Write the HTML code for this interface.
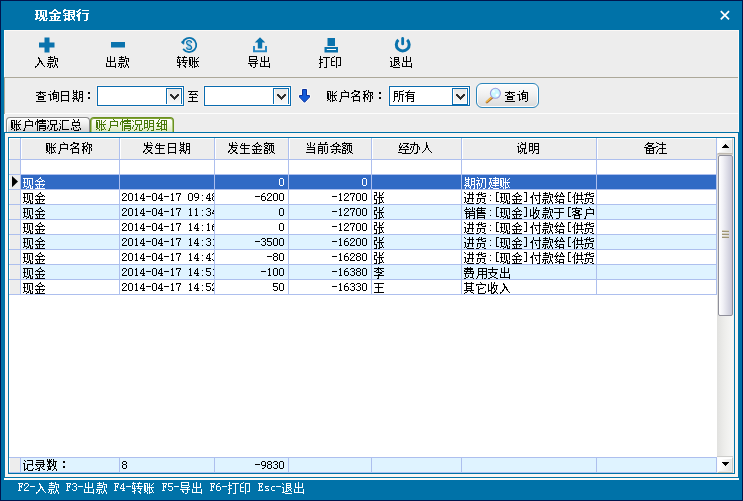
<!DOCTYPE html>
<html lang="zh"><head><meta charset="utf-8"><title>现金银行</title>
<style>
html,body{margin:0;padding:0}
body{width:743px;height:501px;position:relative;overflow:hidden;background:#00154d;font-family:"Liberation Sans",sans-serif;font-size:12px}
.a{position:absolute;display:block}
.t{position:absolute;overflow:hidden;white-space:nowrap;line-height:14px;font-size:12px}
.t svg{position:absolute;left:0;top:0;fill:currentColor;display:block}
.t span{color:transparent;letter-spacing:0}
.tb{font-weight:bold;font-size:13px}
</style></head>
<body>
<svg width="0" height="0" style="position:absolute"><defs>
<path id="g2D" d="M0 5h5v1h-5z"/>
<path id="g30" d="M1 2h3v1h-3zM0 3h1v6h-1zM4 3h1v6h-1zM1 9h3v1h-3z"/>
<path id="g31" d="M2 2h1v1h-1zM1 3h2v1h-2zM2 4h1v5h-1zM1 9h3v1h-3z"/>
<path id="g32" d="M1 2h3v1h-3zM0 3h1v2h-1zM4 3h1v2h-1zM3 5h1v1h-1zM2 6h1v1h-1zM1 7h1v1h-1zM0 8h1v1h-1zM0 9h5v1h-5z"/>
<path id="g33" d="M1 2h3v1h-3zM0 3h1v1h-1zM4 3h1v2h-1zM2 5h2v1h-2zM4 6h1v3h-1zM0 8h1v1h-1zM1 9h3v1h-3z"/>
<path id="g34" d="M3 2h1v1h-1zM2 3h2v1h-2zM1 4h1v2h-1zM3 4h1v3h-1zM0 6h1v1h-1zM0 7h5v1h-5zM3 8h1v1h-1zM2 9h3v1h-3z"/>
<path id="g35" d="M0 2h5v1h-5zM0 3h1v2h-1zM0 5h4v1h-4zM4 6h1v3h-1zM0 8h1v1h-1zM1 9h3v1h-3z"/>
<path id="g36" d="M2 2h2v1h-2zM1 3h1v1h-1zM0 4h1v1h-1zM0 5h4v1h-4zM0 6h1v3h-1zM4 6h1v3h-1zM1 9h3v1h-3z"/>
<path id="g37" d="M0 2h5v1h-5zM0 3h1v1h-1zM4 3h1v1h-1zM3 4h1v2h-1zM2 6h1v4h-1z"/>
<path id="g38" d="M1 2h3v1h-3zM0 3h1v2h-1zM4 3h1v2h-1zM1 5h3v1h-3zM0 6h1v3h-1zM4 6h1v3h-1zM1 9h3v1h-3z"/>
<path id="g39" d="M1 2h3v1h-3zM0 3h1v3h-1zM4 3h1v3h-1zM1 6h4v1h-4zM4 7h1v1h-1zM3 8h1v1h-1zM1 9h2v1h-2z"/>
<path id="g3A" d="M2 4h1v1h-1zM2 9h1v1h-1z"/>
<path id="g45" d="M0 2h5v1h-5zM1 3h1v2h-1zM4 3h1v1h-1zM3 4h1v1h-1zM1 5h3v1h-3zM1 6h1v3h-1zM3 6h1v1h-1zM4 8h1v1h-1zM0 9h5v1h-5z"/>
<path id="g46" d="M0 2h5v1h-5zM1 3h1v2h-1zM4 3h1v1h-1zM3 4h1v1h-1zM1 5h3v1h-3zM1 6h1v3h-1zM3 6h1v1h-1zM0 9h3v1h-3z"/>
<path id="g5B" d="M2 1h3v1h-3zM2 2h1v8h-1zM2 10h3v1h-3z"/>
<path id="g5D" d="M0 1h3v1h-3zM2 2h1v8h-1zM0 10h3v1h-3z"/>
<path id="g63" d="M2 5h3v1h-3zM1 6h1v3h-1zM2 9h3v1h-3z"/>
<path id="g73" d="M1 5h4v1h-4zM1 6h1v1h-1zM2 7h2v1h-2zM4 8h1v1h-1zM1 9h4v1h-4z"/>
<path id="g4E8E" d="M0 2h10v1h-10zM5 3h1v3h-1zM0 6h10v1h-10zM5 7h1v5h-1zM2 12h3v1h-3z"/>
<path id="g4EBA" d="M4 1h1v3h-1zM4 4h2v3h-2zM3 7h1v2h-1zM6 7h1v2h-1zM2 9h1v1h-1zM7 9h1v1h-1zM1 10h1v1h-1zM8 10h1v1h-1zM0 11h1v1h-1zM9 11h1v1h-1z"/>
<path id="g4ED8" d="M3 1h1v3h-1zM9 1h1v3h-1zM2 4h1v1h-1zM4 4h7v1h-7zM1 5h2v1h-2zM9 5h1v7h-1zM0 6h3v1h-3zM5 6h1v2h-1zM2 7h1v6h-1zM6 8h1v2h-1zM7 12h3v1h-3z"/>
<path id="g4F59" d="M6 1h1v1h-1zM5 2h2v1h-2zM3 3h2v1h-2zM7 3h2v1h-2zM2 4h2v1h-2zM8 4h2v1h-2zM0 5h2v1h-2zM3 5h6v1h-6zM10 5h1v1h-1zM6 6h1v2h-1zM1 8h10v1h-10zM6 9h1v3h-1zM2 10h2v1h-2zM8 10h2v1h-2zM1 11h2v1h-2zM9 11h2v1h-2zM4 12h2v1h-2z"/>
<path id="g4F9B" d="M3 1h1v2h-1zM9 1h1v3h-1zM5 2h1v2h-1zM2 3h1v2h-1zM4 4h7v1h-7zM1 5h2v1h-2zM5 5h1v3h-1zM9 5h1v3h-1zM0 6h1v1h-1zM2 6h1v7h-1zM4 8h8v1h-8zM5 10h1v1h-1zM9 10h1v1h-1zM4 11h2v1h-2zM10 11h1v2h-1zM4 12h1v1h-1z"/>
<path id="g5165" d="M3 2h1v1h-1zM3 3h2v1h-2zM4 4h1v1h-1zM4 5h2v1h-2zM4 6h3v1h-3zM4 7h1v1h-1zM6 7h1v1h-1zM3 8h1v1h-1zM6 8h2v1h-2zM2 9h2v1h-2zM7 9h1v1h-1zM2 10h1v1h-1zM8 10h1v1h-1zM0 11h2v1h-2zM9 11h1v1h-1zM0 12h1v1h-1z"/>
<path id="g5176" d="M2 1h1v1h-1zM7 1h1v1h-1zM0 2h10v1h-10zM2 3h1v2h-1zM7 3h1v2h-1zM2 5h6v1h-6zM2 6h1v1h-1zM7 6h1v1h-1zM2 7h6v1h-6zM2 8h1v1h-1zM7 8h1v1h-1zM0 9h10v1h-10zM3 10h1v1h-1zM6 10h1v1h-1zM1 11h2v1h-2zM7 11h2v1h-2zM0 12h1v1h-1zM9 12h1v1h-1z"/>
<path id="g51B5" d="M0 2h1v1h-1zM3 2h7v1h-7zM1 3h1v1h-1zM3 3h1v3h-1zM9 3h1v3h-1zM3 6h7v1h-7zM1 7h1v2h-1zM5 7h1v2h-1zM7 7h1v5h-1zM0 9h1v2h-1zM4 9h1v2h-1zM10 10h1v2h-1zM3 11h2v1h-2zM2 12h1v1h-1zM7 12h3v1h-3z"/>
<path id="g51FA" d="M4 1h1v5h-1zM1 2h1v4h-1zM8 2h1v4h-1zM1 6h8v1h-8zM4 7h1v4h-1zM0 8h1v3h-1zM9 8h1v3h-1zM0 11h10v1h-10zM9 12h1v1h-1z"/>
<path id="g521D" d="M1 1h1v1h-1zM2 2h1v1h-1zM4 2h6v1h-6zM6 3h1v4h-1zM9 3h1v9h-1zM0 4h4v1h-4zM2 5h1v2h-1zM1 7h3v1h-3zM5 7h1v4h-1zM0 8h2v1h-2zM3 8h1v2h-1zM1 9h1v4h-1zM4 11h1v1h-1zM3 12h1v1h-1zM7 12h2v1h-2z"/>
<path id="g524D" d="M2 1h1v2h-1zM7 1h2v1h-2zM7 2h1v1h-1zM0 3h10v1h-10zM0 5h5v1h-5zM6 5h1v6h-1zM9 5h1v7h-1zM0 6h1v1h-1zM4 6h1v1h-1zM0 7h5v1h-5zM0 8h1v1h-1zM4 8h1v1h-1zM0 9h5v1h-5zM0 10h1v3h-1zM4 10h1v2h-1zM3 12h2v1h-2zM7 12h2v1h-2z"/>
<path id="g529E" d="M4 1h1v2h-1zM0 3h8v1h-8zM4 4h1v1h-1zM7 4h1v1h-1zM1 5h1v2h-1zM3 5h1v4h-1zM7 5h2v1h-2zM7 6h1v5h-1zM9 6h1v3h-1zM0 7h1v2h-1zM2 9h1v2h-1zM1 11h1v1h-1zM6 11h2v1h-2zM0 12h1v1h-1zM4 12h3v1h-3z"/>
<path id="g5370" d="M3 1h1v1h-1zM1 2h2v1h-2zM5 2h5v1h-5zM0 3h1v3h-1zM5 3h1v10h-1zM9 3h1v7h-1zM0 6h4v1h-4zM0 7h1v3h-1zM0 10h4v1h-4zM7 10h3v1h-3z"/>
<path id="g53D1" d="M4 1h1v3h-1zM7 1h1v1h-1zM1 2h1v2h-1zM8 2h1v1h-1zM1 4h9v1h-9zM3 5h2v1h-2zM3 6h6v1h-6zM3 7h1v1h-1zM8 7h1v1h-1zM2 8h1v1h-1zM4 8h1v1h-1zM7 8h1v1h-1zM1 9h1v1h-1zM5 9h3v1h-3zM0 10h2v1h-2zM5 10h2v1h-2zM0 11h1v1h-1zM4 11h1v1h-1zM7 11h2v1h-2zM2 12h2v1h-2zM8 12h2v1h-2z"/>
<path id="g540D" d="M3 1h2v1h-2zM3 2h6v1h-6zM1 3h2v1h-2zM7 3h2v1h-2zM0 4h2v1h-2zM7 4h1v1h-1zM3 5h1v1h-1zM5 5h2v1h-2zM4 6h2v1h-2zM1 7h8v1h-8zM0 8h1v1h-1zM2 8h1v3h-1zM8 8h1v3h-1zM2 11h7v1h-7zM2 12h1v1h-1zM8 12h1v1h-1z"/>
<path id="g552E" d="M2 1h1v1h-1zM5 1h1v1h-1zM1 2h9v1h-9zM1 3h1v1h-1zM5 3h1v1h-1zM0 4h9v1h-9zM1 5h1v1h-1zM5 5h1v1h-1zM1 6h8v1h-8zM1 7h9v1h-9zM1 8h1v1h-1zM1 9h8v1h-8zM1 10h1v1h-1zM8 10h1v1h-1zM1 11h8v1h-8zM1 12h1v1h-1zM8 12h1v1h-1z"/>
<path id="g5907" d="M4 1h1v1h-1zM3 2h7v1h-7zM2 3h2v1h-2zM8 3h1v1h-1zM1 4h1v1h-1zM4 4h4v2h-4zM0 6h4v1h-4zM8 6h4v1h-4zM2 7h8v1h-8zM2 8h1v1h-1zM5 8h1v1h-1zM9 8h1v1h-1zM2 9h8v1h-8zM2 10h1v2h-1zM5 10h1v2h-1zM9 10h1v2h-1zM2 12h8v1h-8z"/>
<path id="g5B83" d="M4 1h1v1h-1zM5 2h1v1h-1zM0 3h10v1h-10zM0 4h1v1h-1zM9 4h1v1h-1zM2 5h1v3h-1zM7 6h1v1h-1zM4 7h3v1h-3zM2 8h2v1h-2zM2 9h1v3h-1zM9 10h1v2h-1zM2 12h7v1h-7z"/>
<path id="g5BA2" d="M4 1h1v1h-1zM0 2h10v1h-10zM0 3h1v1h-1zM3 3h1v1h-1zM9 3h1v1h-1zM3 4h5v1h-5zM1 5h3v1h-3zM6 5h2v1h-2zM0 6h1v1h-1zM3 6h4v1h-4zM4 7h3v1h-3zM1 8h3v1h-3zM6 8h4v1h-4zM0 9h1v1h-1zM2 9h6v1h-6zM2 10h1v2h-1zM7 10h1v2h-1zM2 12h6v1h-6z"/>
<path id="g5BFC" d="M1 1h8v1h-8zM1 2h1v2h-1zM8 2h1v2h-1zM1 4h8v1h-8zM1 5h1v1h-1zM9 5h1v1h-1zM1 6h8v1h-8zM7 7h1v1h-1zM0 8h10v1h-10zM2 9h1v1h-1zM7 9h1v3h-1zM2 10h2v1h-2zM3 11h1v1h-1zM5 12h2v1h-2z"/>
<path id="g5EFA" d="M7 1h1v1h-1zM1 2h3v1h-3zM5 2h6v1h-6zM2 3h1v3h-1zM7 3h1v1h-1zM10 3h1v1h-1zM4 4h7v1h-7zM7 5h1v1h-1zM10 5h1v1h-1zM1 6h3v1h-3zM5 6h6v2h-6zM1 7h1v2h-1zM3 7h1v2h-1zM7 8h1v1h-1zM2 9h1v2h-1zM4 9h7v1h-7zM7 10h1v1h-1zM1 11h1v1h-1zM3 11h2v1h-2zM0 12h2v1h-2zM5 12h6v1h-6z"/>
<path id="g5F20" d="M0 1h3v1h-3zM5 1h1v3h-1zM9 1h1v1h-1zM2 2h1v2h-1zM8 2h1v2h-1zM0 4h3v1h-3zM5 4h3v1h-3zM0 5h1v3h-1zM5 5h1v1h-1zM3 6h7v1h-7zM5 7h1v4h-1zM7 7h1v2h-1zM0 8h3v1h-3zM2 9h1v3h-1zM8 9h1v2h-1zM5 11h3v1h-3zM9 11h1v1h-1zM0 12h3v1h-3zM4 12h2v1h-2z"/>
<path id="g5F53" d="M4 1h1v5h-1zM1 2h1v2h-1zM8 2h1v2h-1zM2 4h1v1h-1zM7 4h1v1h-1zM1 6h8v1h-8zM8 7h1v1h-1zM1 8h8v1h-8zM8 9h1v2h-1zM0 11h9v1h-9zM8 12h1v1h-1z"/>
<path id="g5F55" d="M1 2h8v1h-8zM8 3h1v1h-1zM1 4h8v1h-8zM8 5h1v1h-1zM0 6h10v1h-10zM1 7h1v1h-1zM5 7h1v2h-1zM8 7h1v1h-1zM2 8h1v1h-1zM7 8h2v1h-2zM4 9h1v1h-1zM6 9h1v1h-1zM2 10h3v1h-3zM7 10h1v1h-1zM0 11h2v1h-2zM4 11h1v1h-1zM8 11h2v1h-2zM3 12h2v1h-2z"/>
<path id="g603B" d="M2 1h1v1h-1zM7 1h1v2h-1zM3 2h1v2h-1zM6 3h1v1h-1zM1 4h8v1h-8zM1 5h1v2h-1zM8 5h1v2h-1zM1 7h8v1h-8zM4 8h1v1h-1zM2 9h1v3h-1zM5 9h1v1h-1zM8 9h1v1h-1zM0 10h1v2h-1zM9 10h1v2h-1zM7 11h1v1h-1zM3 12h5v1h-5z"/>
<path id="g60C5" d="M2 1h1v2h-1zM7 1h1v1h-1zM4 2h7v1h-7zM1 3h10v1h-10zM0 4h1v3h-1zM2 4h2v1h-2zM7 4h1v1h-1zM2 5h1v8h-1zM4 5h7v1h-7zM4 7h7v2h-7zM4 9h1v1h-1zM10 9h1v1h-1zM4 10h7v1h-7zM4 11h1v2h-1zM10 11h1v1h-1zM8 12h2v1h-2z"/>
<path id="g6237" d="M5 1h1v1h-1zM6 2h1v1h-1zM2 3h8v1h-8zM2 4h1v3h-1zM9 4h1v3h-1zM2 7h8v1h-8zM2 8h1v2h-1zM9 8h1v1h-1zM1 10h1v2h-1zM0 12h2v1h-2z"/>
<path id="g6240" d="M10 1h1v1h-1zM1 2h4v1h-4zM6 2h4v1h-4zM1 3h1v1h-1zM6 3h1v2h-1zM1 4h4v1h-4zM1 5h1v2h-1zM4 5h1v2h-1zM6 5h5v1h-5zM6 6h1v5h-1zM9 6h1v7h-1zM1 7h4v1h-4zM1 8h1v4h-1zM5 11h1v2h-1zM0 12h1v1h-1z"/>
<path id="g6253" d="M1 1h1v3h-1zM4 2h7v1h-7zM7 3h1v9h-1zM0 4h4v1h-4zM1 5h1v2h-1zM1 7h3v1h-3zM0 8h2v1h-2zM1 9h1v3h-1zM0 12h2v1h-2zM5 12h3v1h-3z"/>
<path id="g652F" d="M4 1h1v2h-1zM0 3h10v1h-10zM4 4h1v2h-1zM0 6h9v1h-9zM2 7h1v2h-1zM7 7h2v1h-2zM7 8h1v1h-1zM3 9h1v1h-1zM6 9h1v1h-1zM4 10h2v1h-2zM2 11h2v1h-2zM6 11h2v1h-2zM0 12h2v1h-2zM8 12h2v1h-2z"/>
<path id="g6536" d="M3 1h1v5h-1zM6 1h1v2h-1zM0 3h1v6h-1zM5 3h1v1h-1zM5 4h5v1h-5zM5 5h1v1h-1zM8 5h1v4h-1zM3 6h3v1h-3zM3 7h2v1h-2zM6 7h1v2h-1zM3 8h1v1h-1zM0 9h4v1h-4zM7 9h1v1h-1zM0 10h1v1h-1zM3 10h1v2h-1zM6 10h2v1h-2zM5 11h2v1h-2zM8 11h1v1h-1zM3 12h3v1h-3zM9 12h1v1h-1z"/>
<path id="g6570" d="M0 1h1v2h-1zM2 1h1v1h-1zM4 1h1v1h-1zM6 1h1v2h-1zM2 2h2v1h-2zM0 3h5v1h-5zM6 3h4v1h-4zM1 4h3v1h-3zM6 4h1v2h-1zM8 4h1v4h-1zM1 5h2v1h-2zM4 5h1v1h-1zM0 6h1v1h-1zM2 6h1v2h-1zM5 6h2v2h-2zM0 8h5v1h-5zM7 8h2v1h-2zM1 9h1v1h-1zM3 9h1v1h-1zM7 9h1v1h-1zM1 10h3v2h-3zM7 10h2v1h-2zM6 11h1v1h-1zM9 11h1v2h-1zM0 12h1v1h-1zM5 12h1v1h-1z"/>
<path id="g65E5" d="M1 2h8v1h-8zM1 3h1v3h-1zM8 3h1v3h-1zM1 6h8v1h-8zM1 7h1v4h-1zM8 7h1v4h-1zM1 11h8v1h-8zM1 12h1v1h-1zM8 12h1v1h-1z"/>
<path id="g660E" d="M0 2h4v1h-4zM5 2h5v1h-5zM0 3h1v2h-1zM3 3h1v2h-1zM5 3h1v2h-1zM9 3h1v2h-1zM0 5h4v1h-4zM5 5h5v1h-5zM0 6h1v3h-1zM3 6h1v3h-1zM5 6h1v2h-1zM9 6h1v2h-1zM5 8h5v1h-5zM0 9h4v1h-4zM5 9h1v1h-1zM9 9h1v3h-1zM0 10h1v1h-1zM4 10h1v2h-1zM3 12h1v1h-1zM7 12h3v1h-3z"/>
<path id="g6709" d="M4 1h1v1h-1zM3 2h1v1h-1zM0 3h10v1h-10zM2 4h1v1h-1zM2 5h7v1h-7zM1 6h2v1h-2zM8 6h1v1h-1zM0 7h1v1h-1zM2 7h7v1h-7zM2 8h1v1h-1zM8 8h1v1h-1zM2 9h7v1h-7zM2 10h1v3h-1zM8 10h1v2h-1zM6 12h3v1h-3z"/>
<path id="g671F" d="M1 1h1v2h-1zM4 1h1v2h-1zM7 2h4v1h-4zM1 3h5v1h-5zM7 3h1v2h-1zM10 3h1v2h-1zM1 4h1v1h-1zM4 4h1v1h-1zM2 5h3v1h-3zM7 5h4v1h-4zM1 6h1v1h-1zM4 6h1v1h-1zM7 6h1v2h-1zM10 6h1v2h-1zM2 7h3v1h-3zM1 8h1v1h-1zM4 8h1v1h-1zM7 8h4v1h-4zM0 9h6v1h-6zM7 9h1v1h-1zM10 9h1v3h-1zM2 10h1v1h-1zM4 10h1v1h-1zM6 10h1v1h-1zM1 11h1v2h-1zM5 11h2v1h-2zM6 12h1v1h-1zM9 12h2v1h-2z"/>
<path id="g674E" d="M4 1h1v1h-1zM0 2h10v1h-10zM3 3h2v1h-2zM6 3h1v1h-1zM2 4h1v1h-1zM4 4h1v2h-1zM7 4h1v1h-1zM0 5h2v1h-2zM8 5h2v1h-2zM2 6h6v1h-6zM6 7h2v1h-2zM4 8h2v1h-2zM0 9h10v1h-10zM4 10h1v2h-1zM3 12h2v1h-2z"/>
<path id="g67E5" d="M4 2h1v1h-1zM0 3h10v1h-10zM3 4h2v1h-2zM6 4h1v1h-1zM2 5h1v1h-1zM4 5h1v1h-1zM7 5h1v1h-1zM0 6h2v1h-2zM8 6h2v1h-2zM2 7h6v2h-6zM2 9h1v1h-1zM7 9h1v1h-1zM2 10h6v1h-6zM0 12h10v1h-10z"/>
<path id="g6B3E" d="M3 1h1v1h-1zM7 1h1v2h-1zM1 2h5v1h-5zM3 3h1v1h-1zM7 3h4v1h-4zM1 4h6v1h-6zM10 4h1v3h-1zM6 5h1v1h-1zM8 5h1v4h-1zM1 6h6v1h-6zM0 8h6v1h-6zM1 9h1v2h-1zM3 9h1v3h-1zM8 9h2v1h-2zM5 10h1v2h-1zM7 10h1v2h-1zM9 10h1v1h-1zM0 11h1v1h-1zM10 11h1v2h-1zM2 12h2v1h-2zM6 12h1v1h-1z"/>
<path id="g6C47" d="M1 2h1v1h-1zM3 2h7v1h-7zM3 3h1v8h-1zM0 5h1v1h-1zM1 6h1v1h-1zM1 8h1v3h-1zM0 11h1v2h-1zM3 11h7v1h-7z"/>
<path id="g6CE8" d="M0 1h1v1h-1zM6 1h1v2h-1zM1 2h2v1h-2zM3 3h7v1h-7zM6 4h1v3h-1zM0 5h2v1h-2zM3 7h7v1h-7zM2 8h1v1h-1zM6 8h1v4h-1zM1 9h1v2h-1zM0 11h1v2h-1zM3 12h8v1h-8z"/>
<path id="g738B" d="M0 2h10v1h-10zM4 3h1v3h-1zM1 6h8v1h-8zM4 7h1v4h-1zM0 11h10v1h-10z"/>
<path id="g73B0" d="M0 2h10v1h-10zM1 3h1v3h-1zM4 3h1v6h-1zM9 3h1v6h-1zM6 4h1v5h-1zM0 6h3v1h-3zM1 7h1v3h-1zM6 9h2v1h-2zM1 10h3v1h-3zM5 10h1v1h-1zM7 10h1v2h-1zM9 10h1v2h-1zM0 11h1v1h-1zM4 11h2v1h-2zM3 12h1v1h-1zM7 12h3v1h-3z"/>
<path id="g751F" d="M2 2h1v1h-1zM4 2h1v2h-1zM1 3h1v1h-1zM1 4h9v1h-9zM0 5h1v2h-1zM4 5h1v2h-1zM1 7h8v1h-8zM4 8h1v4h-1zM0 12h10v1h-10z"/>
<path id="g7528" d="M2 2h9v1h-9zM2 3h1v2h-1zM6 3h1v2h-1zM10 3h1v2h-1zM2 5h9v1h-9zM2 6h1v2h-1zM6 6h1v2h-1zM10 6h1v2h-1zM2 8h9v1h-9zM2 9h1v1h-1zM6 9h1v4h-1zM10 9h1v3h-1zM1 10h1v2h-1zM0 12h1v1h-1zM8 12h2v1h-2z"/>
<path id="g79F0" d="M3 1h1v1h-1zM5 1h1v2h-1zM0 2h3v1h-3zM1 3h1v2h-1zM5 3h5v1h-5zM4 4h1v1h-1zM7 4h1v2h-1zM9 4h1v2h-1zM0 5h5v1h-5zM1 6h2v2h-2zM5 6h1v2h-1zM7 6h2v1h-2zM7 7h1v5h-1zM9 7h1v3h-1zM0 8h2v2h-2zM3 8h2v1h-2zM4 9h1v2h-1zM1 10h1v3h-1zM6 12h2v1h-2z"/>
<path id="g7EC6" d="M3 1h1v1h-1zM2 2h1v2h-1zM5 2h6v1h-6zM5 3h1v1h-1zM8 3h1v3h-1zM10 3h1v3h-1zM1 4h1v1h-1zM4 4h2v1h-2zM0 5h4v1h-4zM5 5h1v1h-1zM2 6h1v1h-1zM5 6h6v1h-6zM1 7h2v1h-2zM5 7h1v1h-1zM8 7h1v4h-1zM10 7h1v4h-1zM1 8h5v1h-5zM5 9h1v1h-1zM4 10h2v1h-2zM0 11h4v1h-4zM5 11h6v1h-6zM5 12h1v1h-1zM10 12h1v1h-1z"/>
<path id="g7ECF" d="M2 2h1v2h-1zM5 2h6v1h-6zM9 3h1v1h-1zM1 4h1v2h-1zM4 4h1v1h-1zM8 4h1v1h-1zM3 5h1v1h-1zM7 5h3v1h-3zM1 6h3v1h-3zM5 6h2v1h-2zM9 6h2v1h-2zM2 7h1v1h-1zM1 8h10v1h-10zM1 9h1v1h-1zM7 9h1v3h-1zM0 11h4v1h-4zM4 12h8v1h-8z"/>
<path id="g7ED9" d="M3 1h1v1h-1zM7 1h1v1h-1zM2 2h1v2h-1zM7 2h2v1h-2zM6 3h1v2h-1zM8 3h1v1h-1zM1 4h1v1h-1zM3 4h2v1h-2zM9 4h1v1h-1zM0 5h4v1h-4zM5 5h6v1h-6zM2 6h1v2h-1zM1 8h1v1h-1zM3 8h1v1h-1zM5 8h5v1h-5zM2 9h1v1h-1zM5 9h1v1h-1zM9 9h1v2h-1zM3 10h3v1h-3zM1 11h2v1h-2zM5 11h5v1h-5zM5 12h1v1h-1zM9 12h1v1h-1z"/>
<path id="g81F3" d="M0 2h10v1h-10zM3 3h1v1h-1zM2 4h1v1h-1zM7 4h1v1h-1zM1 5h8v1h-8zM9 6h1v1h-1zM4 7h1v1h-1zM1 8h8v1h-8zM4 9h1v3h-1zM0 12h10v1h-10z"/>
<path id="g8BB0" d="M1 2h1v1h-1zM4 2h6v1h-6zM2 3h1v1h-1zM9 3h1v3h-1zM0 5h2v1h-2zM1 6h1v5h-1zM4 6h6v1h-6zM4 7h1v3h-1zM9 7h1v1h-1zM3 10h2v1h-2zM10 10h1v1h-1zM1 11h2v1h-2zM4 11h1v1h-1zM9 11h1v1h-1zM1 12h1v1h-1zM5 12h5v1h-5z"/>
<path id="g8BE2" d="M6 1h1v2h-1zM2 2h1v1h-1zM5 3h6v1h-6zM4 4h2v1h-2zM10 4h1v8h-1zM0 5h3v1h-3zM4 5h5v1h-5zM2 6h1v4h-1zM5 6h1v1h-1zM8 6h1v1h-1zM5 7h4v1h-4zM5 8h1v1h-1zM8 8h1v1h-1zM5 9h4v1h-4zM2 10h2v1h-2zM5 10h1v1h-1zM2 11h1v1h-1zM8 12h2v1h-2z"/>
<path id="g8BF4" d="M4 1h1v1h-1zM8 1h1v2h-1zM1 2h1v1h-1zM5 2h1v1h-1zM4 3h5v1h-5zM3 4h1v3h-1zM8 4h1v3h-1zM0 5h2v1h-2zM1 6h1v4h-1zM4 7h5v1h-5zM5 8h1v3h-1zM7 8h1v4h-1zM3 9h1v1h-1zM1 10h3v1h-3zM1 11h1v1h-1zM4 11h1v1h-1zM9 11h1v1h-1zM3 12h1v1h-1zM7 12h3v1h-3z"/>
<path id="g8D26" d="M0 2h4v1h-4zM5 2h1v4h-1zM9 2h1v1h-1zM0 3h1v1h-1zM3 3h1v3h-1zM8 3h1v1h-1zM0 4h2v6h-2zM7 4h1v1h-1zM3 6h7v1h-7zM3 7h1v3h-1zM5 7h1v4h-1zM7 7h1v2h-1zM8 9h1v2h-1zM1 10h2v1h-2zM0 11h1v1h-1zM3 11h1v2h-1zM5 11h3v1h-3zM9 11h1v1h-1zM5 12h1v1h-1z"/>
<path id="g8D27" d="M3 1h1v1h-1zM5 1h1v2h-1zM2 2h1v1h-1zM7 2h3v1h-3zM0 3h7v1h-7zM2 4h1v2h-1zM5 4h1v1h-1zM9 4h1v1h-1zM6 5h4v1h-4zM1 7h8v1h-8zM1 8h1v3h-1zM4 8h1v3h-1zM8 8h1v3h-1zM3 11h1v1h-1zM6 11h2v1h-2zM0 12h3v1h-3zM8 12h2v1h-2z"/>
<path id="g8D39" d="M3 1h1v1h-1zM6 1h1v1h-1zM0 2h9v1h-9zM1 3h8v1h-8zM0 4h1v1h-1zM3 4h1v1h-1zM6 4h1v1h-1zM0 5h10v1h-10zM2 6h1v1h-1zM6 6h1v1h-1zM9 6h1v1h-1zM0 7h10v1h-10zM1 8h1v3h-1zM8 8h1v3h-1zM4 9h1v2h-1zM2 11h2v1h-2zM6 11h3v1h-3zM0 12h2v1h-2zM9 12h1v1h-1z"/>
<path id="g8F6C" d="M1 1h1v1h-1zM7 1h1v1h-1zM0 2h4v1h-4zM5 2h5v1h-5zM1 3h1v1h-1zM6 3h1v2h-1zM0 4h1v3h-1zM2 4h1v3h-1zM4 5h7v1h-7zM6 6h1v1h-1zM0 7h4v1h-4zM5 7h5v1h-5zM2 8h1v1h-1zM8 8h1v2h-1zM2 9h2v1h-2zM0 10h3v1h-3zM6 10h2v1h-2zM2 11h1v2h-1zM7 11h2v1h-2zM8 12h1v1h-1z"/>
<path id="g8FDB" d="M0 1h1v1h-1zM5 1h1v2h-1zM8 1h1v2h-1zM1 2h1v1h-1zM3 3h7v1h-7zM5 4h1v3h-1zM8 4h1v3h-1zM0 6h2v1h-2zM1 7h1v4h-1zM3 7h7v1h-7zM4 8h1v2h-1zM8 8h1v3h-1zM3 10h2v1h-2zM0 11h1v1h-1zM2 11h1v1h-1zM3 12h7v1h-7z"/>
<path id="g9000" d="M0 2h1v1h-1zM4 2h5v1h-5zM1 3h1v1h-1zM4 3h1v1h-1zM8 3h1v1h-1zM4 4h5v1h-5zM4 5h1v1h-1zM8 5h1v1h-1zM0 6h2v1h-2zM4 6h5v1h-5zM1 7h1v4h-1zM4 7h1v3h-1zM6 7h1v1h-1zM9 7h1v1h-1zM7 8h2v1h-2zM6 9h1v1h-1zM8 9h1v1h-1zM3 10h3v1h-3zM9 10h1v1h-1zM0 11h3v1h-3zM3 12h7v1h-7z"/>
<path id="g91D1" d="M5 1h1v1h-1zM4 2h2v1h-2zM3 3h1v1h-1zM6 3h1v1h-1zM1 4h2v1h-2zM7 4h2v1h-2zM0 5h1v1h-1zM2 5h6v1h-6zM9 5h1v1h-1zM4 6h1v2h-1zM0 8h10v1h-10zM1 9h1v1h-1zM4 9h1v3h-1zM8 9h1v1h-1zM2 10h1v2h-1zM7 10h1v1h-1zM0 12h10v1h-10z"/>
<path id="g9500" d="M2 1h1v2h-1zM8 1h1v4h-1zM5 2h1v1h-1zM10 2h1v2h-1zM1 3h4v1h-4zM6 3h1v1h-1zM0 4h1v1h-1zM1 5h10v1h-10zM2 6h1v1h-1zM5 6h1v1h-1zM10 6h1v1h-1zM1 7h10v1h-10zM2 8h1v3h-1zM5 8h1v1h-1zM10 8h1v1h-1zM5 9h6v1h-6zM4 10h2v1h-2zM10 10h1v2h-1zM2 11h2v1h-2zM5 11h1v2h-1zM2 12h1v1h-1zM9 12h2v1h-2z"/>
<path id="g989D" d="M2 1h1v1h-1zM0 2h10v1h-10zM0 3h1v1h-1zM4 3h1v1h-1zM7 3h1v1h-1zM1 4h3v1h-3zM5 4h5v1h-5zM0 5h1v1h-1zM3 5h1v1h-1zM5 5h1v3h-1zM7 5h1v5h-1zM9 5h1v5h-1zM1 6h2v1h-2zM1 7h3v1h-3zM0 8h1v1h-1zM4 8h2v1h-2zM0 9h4v1h-4zM5 9h1v1h-1zM0 10h1v2h-1zM3 10h1v2h-1zM7 10h2v1h-2zM6 11h1v1h-1zM8 11h2v1h-2zM0 12h4v1h-4zM5 12h1v1h-1zM10 12h1v1h-1z"/>
<path id="gFF1A" d="M4 3h2v2h-2zM4 8h2v2h-2z"/>
<path id="b73B0" d="M1 2h12v1h-12zM2 3h2v3h-2zM6 3h2v4h-2zM11 3h2v6h-2zM9 4h1v3h-1zM1 6h4v1h-4zM2 7h2v3h-2zM6 7h4v2h-4zM5 9h1v1h-1zM8 9h3v1h-3zM1 10h5v1h-5zM7 10h4v1h-4zM12 10h2v1h-2zM1 11h2v1h-2zM6 11h2v1h-2zM9 11h2v1h-2zM12 11h1v1h-1zM5 12h2v1h-2zM9 12h4v1h-4z"/>
<path id="b884C" d="M3 1h2v1h-2zM2 2h2v1h-2zM6 2h7v1h-7zM0 3h3v1h-3zM1 4h1v1h-1zM3 4h2v1h-2zM2 5h3v1h-3zM6 5h7v1h-7zM1 6h3v1h-3zM10 6h2v6h-2zM0 7h4v1h-4zM1 8h3v1h-3zM2 9h2v4h-2zM8 12h3v1h-3z"/>
<path id="b91D1" d="M6 1h2v1h-2zM5 2h4v1h-4zM4 3h2v1h-2zM8 3h2v1h-2zM1 4h4v1h-4zM9 4h4v1h-4zM1 5h12v1h-12zM6 6h2v2h-2zM2 8h10v1h-10zM3 9h1v1h-1zM6 9h2v3h-2zM10 9h2v1h-2zM3 10h2v1h-2zM9 10h2v1h-2zM3 11h1v1h-1zM9 11h1v1h-1zM1 12h12v1h-12z"/>
<path id="b94F6" d="M2 1h2v1h-2zM1 2h12v1h-12zM1 3h2v1h-2zM6 3h2v1h-2zM11 3h2v1h-2zM1 4h1v1h-1zM6 4h7v1h-7zM2 5h6v1h-6zM11 5h2v1h-2zM3 6h1v1h-1zM6 6h7v1h-7zM1 7h7v1h-7zM9 7h1v1h-1zM12 7h1v1h-1zM3 8h1v2h-1zM6 8h2v2h-2zM9 8h4v1h-4zM10 9h2v2h-2zM3 10h5v1h-5zM2 11h8v1h-8zM11 11h2v1h-2zM2 12h2v1h-2zM6 12h2v1h-2zM12 12h1v1h-1z"/>
</defs></svg>
<div class="a" style="left:1px;top:1px;width:741px;height:499px;background:#0072a8"></div>
<div class="t tb" style="left:34px;top:8px;width:56px;height:16px;color:#fff"><svg width="56" height="16" shape-rendering="crispEdges"><g transform="translate(0,0)"><use href="#b73B0"/><use href="#b91D1" x="14"/><use href="#b94F6" x="28"/><use href="#b884C" x="42"/></g></svg><span>现金银行</span></div>
<svg class="a" style="left:718px;top:8px" width="14" height="14"><path d="M2.8 3.1 L11 11.4 M11 3.1 L2.8 11.4" stroke="#fff" stroke-width="1.7" fill="none"/></svg>
<div class="a" style="left:4px;top:30px;width:735px;height:102px;background:#ededed"></div>
<div class="a" style="left:4px;top:30px;width:735px;height:1px;background:#fbf8f6"></div>
<div class="a" style="left:4px;top:30px;width:1px;height:47px;background:#fbf8f6"></div>
<div class="a" style="left:738px;top:30px;width:1px;height:102px;background:#fbf8f6"></div>
<div class="a" style="left:4px;top:77px;width:734px;height:1px;background:#aca899"></div>
<div class="a" style="left:4px;top:78px;width:1px;height:36px;background:#aca899"></div>
<div class="a" style="left:5px;top:113px;width:734px;height:1px;background:#fdfdfd"></div>
<div class="a" style="left:4px;top:114px;width:1px;height:18px;background:#fbf8f6"></div>
<svg class="a" style="left:39px;top:37px;overflow:visible" width="16" height="16"><path d="M5.5 .5h5v5h5v5h-5v5h-5v-5h-5.5v-5h5.5z" fill="#0a73ad"/></svg>
<div class="t" style="left:35px;top:55px;width:24px;height:15px;color:#000"><svg width="24" height="15" shape-rendering="crispEdges"><g transform="translate(0,0)"><use href="#g5165"/><use href="#g6B3E" x="12"/></g></svg><span>入款</span></div>
<svg class="a" style="left:110px;top:37px;overflow:visible" width="16" height="16"><rect x="1" y="5" width="14" height="5.5" fill="#0a73ad"/></svg>
<div class="t" style="left:106px;top:55px;width:24px;height:15px;color:#000"><svg width="24" height="15" shape-rendering="crispEdges"><g transform="translate(0,0)"><use href="#g51FA"/><use href="#g6B3E" x="12"/></g></svg><span>出款</span></div>
<svg class="a" style="left:181px;top:37px;overflow:visible" width="16" height="16"><path d="M1.5 5.6A7.1 7.1 0 1 1 2.6 12.4" fill="none" stroke="#0a73ad" stroke-width="1.8" stroke-linecap="round"/><path d="M.4 5L3.1 4.2L2.8 7.3Z" fill="#0a73ad" stroke="#0a73ad" stroke-width=".7" stroke-linejoin="round"/><rect x="6.2" y="4.4" width="3.8" height="7.4" rx="1.6" fill="#a9d3eb"/><path d="M10.6 5.9C10.4 4.4 9.3 3.7 8 3.7C6.6 3.7 5.6 4.5 5.6 5.7C5.6 7.2 6.8 7.6 8.1 8.1C9.5 8.6 10.6 9.1 10.6 10.5C10.6 11.7 9.6 12.4 8.1 12.4C6.6 12.4 5.7 11.7 5.4 10.3" fill="none" stroke="#0a73ad" stroke-width="1.3"/></svg>
<div class="t" style="left:177px;top:55px;width:24px;height:15px;color:#000"><svg width="24" height="15" shape-rendering="crispEdges"><g transform="translate(0,0)"><use href="#g8F6C"/><use href="#g8D26" x="12"/></g></svg><span>转账</span></div>
<svg class="a" style="left:252px;top:37px;overflow:visible" width="16" height="16"><path d="M8 .3L13.3 5.6H10.2V11.6H5.8V5.6H2.7Z" fill="#0a73ad"/><path d="M2 9v5.2h12V9" fill="none" stroke="#2a8bc6" stroke-width="2"/></svg>
<div class="t" style="left:248px;top:55px;width:24px;height:15px;color:#000"><svg width="24" height="15" shape-rendering="crispEdges"><g transform="translate(0,0)"><use href="#g5BFC"/><use href="#g51FA" x="12"/></g></svg><span>导出</span></div>
<svg class="a" style="left:323px;top:37px;overflow:visible" width="16" height="16"><rect x="4.5" y="1" width="7.5" height="8" fill="#0a73ad"/><rect x="1.5" y="10" width="13.5" height="5.5" fill="#0a73ad"/><rect x="3.8" y="12" width="9.2" height="1" fill="#fff"/></svg>
<div class="t" style="left:319px;top:55px;width:24px;height:15px;color:#000"><svg width="24" height="15" shape-rendering="crispEdges"><g transform="translate(0,0)"><use href="#g6253"/><use href="#g5370" x="12"/></g></svg><span>打印</span></div>
<svg class="a" style="left:394px;top:37px;overflow:visible" width="16" height="16"><path d="M4.35 2.85A6.45 6.45 0 1 0 13.15 2.85" fill="none" stroke="#0a73ad" stroke-width="3" stroke-linecap="butt"/><path d="M8.65 1.5V6.9" stroke="#0a73ad" stroke-width="2.8" stroke-linecap="round"/></svg>
<div class="t" style="left:390px;top:55px;width:24px;height:15px;color:#000"><svg width="24" height="15" shape-rendering="crispEdges"><g transform="translate(0,0)"><use href="#g9000"/><use href="#g51FA" x="12"/></g></svg><span>退出</span></div>
<div class="t" style="left:36px;top:89px;width:60px;height:15px;color:#000"><svg width="60" height="15" shape-rendering="crispEdges"><g transform="translate(0,0)"><use href="#g67E5"/><use href="#g8BE2" x="12"/><use href="#g65E5" x="24"/><use href="#g671F" x="36"/><use href="#gFF1A" x="48"/></g></svg><span>查询日期：</span></div>
<div class="a" style="left:97px;top:86px;width:87px;height:20px;background:#fff;border:1px solid #0a6cb0;box-sizing:border-box;box-shadow:0 0 0 1px rgba(255,246,240,.55)"></div>
<div class="a" style="left:166px;top:88px;width:16px;height:16px;box-sizing:border-box;border:1px solid #0a6cb0;border-bottom:none;background:#fff"></div>
<div class="a" style="left:168px;top:89px;width:12px;height:15px;background:linear-gradient(#e6e6e6,#f0f0f0 60%,#f8f8f8)"></div>
<svg class="a" style="left:170px;top:94px" width="9" height="6" shape-rendering="crispEdges"><path d="M0 0h2v1h-2zM7 0h2v1h-2zM0 1h3v1h-3zM6 1h3v1h-3zM1 2h3v1h-3zM5 2h3v1h-3zM2 3h5v1h-5zM3 4h3v1h-3zM4 5h1v1h-1z" fill="#2e2e2e"/></svg>
<div class="t" style="left:188px;top:89px;width:12px;height:15px;color:#000"><svg width="12" height="15" shape-rendering="crispEdges"><g transform="translate(0,0)"><use href="#g81F3"/></g></svg><span>至</span></div>
<div class="a" style="left:204px;top:86px;width:87px;height:20px;background:#fff;border:1px solid #0a6cb0;box-sizing:border-box;box-shadow:0 0 0 1px rgba(255,246,240,.55)"></div>
<div class="a" style="left:273px;top:88px;width:16px;height:16px;box-sizing:border-box;border:1px solid #0a6cb0;border-bottom:none;background:#fff"></div>
<div class="a" style="left:275px;top:89px;width:12px;height:15px;background:linear-gradient(#e6e6e6,#f0f0f0 60%,#f8f8f8)"></div>
<svg class="a" style="left:277px;top:94px" width="9" height="6" shape-rendering="crispEdges"><path d="M0 0h2v1h-2zM7 0h2v1h-2zM0 1h3v1h-3zM6 1h3v1h-3zM1 2h3v1h-3zM5 2h3v1h-3zM2 3h5v1h-5zM3 4h3v1h-3zM4 5h1v1h-1z" fill="#2e2e2e"/></svg>
<svg class="a" style="left:298px;top:88px" width="14" height="17"><path d="M4.5 1.5H8.5V7.5H11.5V9.1L6.5 14.3L1.5 9.1V7.5H4.5Z" fill="none" stroke="#fff" stroke-opacity=".75" stroke-width="2.6" stroke-linejoin="round"/><path d="M4.5 1.5H8.5V7.5H11.5V9.1L6.5 14.3L1.5 9.1V7.5H4.5Z" fill="#115ad8" stroke="#0a309c" stroke-width="1"/></svg>
<div class="t" style="left:327px;top:89px;width:60px;height:15px;color:#000"><svg width="60" height="15" shape-rendering="crispEdges"><g transform="translate(0,0)"><use href="#g8D26"/><use href="#g6237" x="12"/><use href="#g540D" x="24"/><use href="#g79F0" x="36"/><use href="#gFF1A" x="48"/></g></svg><span>账户名称：</span></div>
<div class="a" style="left:389px;top:86px;width:81px;height:20px;background:#fff;border:1px solid #0a6cb0;box-sizing:border-box;box-shadow:0 0 0 1px rgba(255,246,240,.55)"></div>
<div class="a" style="left:452px;top:88px;width:16px;height:17px;box-sizing:border-box;border:1px solid #0a6cb0;background:#fff"></div>
<div class="a" style="left:454px;top:89px;width:12px;height:14px;background:linear-gradient(#e6e6e6,#f0f0f0 60%,#f8f8f8)"></div>
<svg class="a" style="left:456px;top:94px" width="9" height="6" shape-rendering="crispEdges"><path d="M0 0h2v1h-2zM7 0h2v1h-2zM0 1h3v1h-3zM6 1h3v1h-3zM1 2h3v1h-3zM5 2h3v1h-3zM2 3h5v1h-5zM3 4h3v1h-3zM4 5h1v1h-1z" fill="#2e2e2e"/></svg>
<div class="t" style="left:393px;top:89px;width:24px;height:15px;color:#000"><svg width="24" height="15" shape-rendering="crispEdges"><g transform="translate(0,0)"><use href="#g6240"/><use href="#g6709" x="12"/></g></svg><span>所有</span></div>
<div class="a" style="left:476px;top:83px;width:63px;height:25px;box-sizing:border-box;border:1px solid #2b85bb;border-radius:6px;background:linear-gradient(#fdfdfd,#f1f1f1 45%,#dadada);box-shadow:inset 0 0 0 1px #fff"></div>
<svg class="a" style="left:484px;top:86px" width="20" height="20"><path d="M8.3 11.3L2.9 16.1" stroke="#a8682a" stroke-width="2.5" stroke-linecap="round"/><path d="M8 10.9L2.6 15.7" stroke="#f4bc48" stroke-width="1.5" stroke-linecap="round"/><circle cx="11.4" cy="7.3" r="5" fill="#c9f7ff" stroke="#9d9de0" stroke-width="1.1"/><circle cx="9.6" cy="5.4" r="1.3" fill="#f4feff"/><circle cx="13" cy="9.1" r="1.5" fill="#fff"/></svg>
<div class="t" style="left:505px;top:89px;width:24px;height:15px;color:#000"><svg width="24" height="15" shape-rendering="crispEdges"><g transform="translate(0,0)"><use href="#g67E5"/><use href="#g8BE2" x="12"/></g></svg><span>查询</span></div>
<div class="a" style="left:6px;top:117px;width:84px;height:15px;box-sizing:border-box;border:1px solid #8a8a8a;border-bottom:none;border-radius:4px 4px 0 0;background:linear-gradient(#fefefe,#f0f0f0 40%,#d2d2d2);box-shadow:inset 1px 1px 0 #fff"></div>
<div class="t" style="left:11px;top:118px;width:72px;height:15px;color:#000"><svg width="72" height="15" shape-rendering="crispEdges"><g transform="translate(0,0)"><use href="#g8D26"/><use href="#g6237" x="12"/><use href="#g60C5" x="24"/><use href="#g51B5" x="36"/><use href="#g6C47" x="48"/><use href="#g603B" x="60"/></g></svg><span>账户情况汇总</span></div>
<div class="a" style="left:90px;top:117px;width:84px;height:15px;box-sizing:border-box;border:1px solid #6a9020;border-bottom:none;border-radius:4px 4px 0 0;background:linear-gradient(#fff,#f4f8ea 45%,#dbe9c2);box-shadow:inset 0 1px 0 #7fa032,inset 1px 0 0 #a9c678,inset -1px 0 0 #a9c678"></div>
<div class="t" style="left:96px;top:118px;width:72px;height:15px;color:#47780a"><svg width="72" height="15" shape-rendering="crispEdges"><g transform="translate(0,0)"><use href="#g8D26"/><use href="#g6237" x="12"/><use href="#g60C5" x="24"/><use href="#g51B5" x="36"/><use href="#g660E" x="48"/><use href="#g7EC6" x="60"/></g></svg><span>账户情况明细</span></div>
<div class="a" style="left:4px;top:132px;width:735px;height:346px;background:#fbf6f2;border:1px solid #0072a8;box-sizing:border-box"></div>
<div class="a" style="left:4px;top:478px;width:735px;height:2px;background:#fdfbf8"></div>
<div class="a" style="left:8px;top:137px;width:727px;height:337px;background:#fff;border:1px solid #0072a8;box-sizing:border-box"></div>
<div class="a" style="left:9px;top:138px;width:708px;height:21px;background:#ededed"></div>
<div class="a" style="left:9px;top:159px;width:708px;height:1px;background:#adbfee"></div>
<div class="a" style="left:9px;top:138px;width:708px;height:1px;background:#fff"></div>
<div class="a" style="left:20px;top:138px;width:1px;height:22px;background:#adbfee"></div>
<div class="a" style="left:21px;top:138px;width:1px;height:21px;background:#fff"></div>
<div class="a" style="left:119px;top:138px;width:1px;height:22px;background:#adbfee"></div>
<div class="a" style="left:120px;top:138px;width:1px;height:21px;background:#fff"></div>
<div class="a" style="left:214px;top:138px;width:1px;height:22px;background:#adbfee"></div>
<div class="a" style="left:215px;top:138px;width:1px;height:21px;background:#fff"></div>
<div class="a" style="left:288px;top:138px;width:1px;height:22px;background:#adbfee"></div>
<div class="a" style="left:289px;top:138px;width:1px;height:21px;background:#fff"></div>
<div class="a" style="left:371px;top:138px;width:1px;height:22px;background:#adbfee"></div>
<div class="a" style="left:372px;top:138px;width:1px;height:21px;background:#fff"></div>
<div class="a" style="left:461px;top:138px;width:1px;height:22px;background:#adbfee"></div>
<div class="a" style="left:462px;top:138px;width:1px;height:21px;background:#fff"></div>
<div class="a" style="left:596px;top:138px;width:1px;height:22px;background:#adbfee"></div>
<div class="a" style="left:597px;top:138px;width:1px;height:21px;background:#fff"></div>
<div class="a" style="left:716px;top:138px;width:1px;height:22px;background:#adbfee"></div>
<div class="a" style="left:9px;top:138px;width:1px;height:21px;background:#fff"></div>
<div class="t" style="left:46px;top:141px;width:48px;height:15px;color:#000"><svg width="48" height="15" shape-rendering="crispEdges"><g transform="translate(0,0)"><use href="#g8D26"/><use href="#g6237" x="12"/><use href="#g540D" x="24"/><use href="#g79F0" x="36"/></g></svg><span>账户名称</span></div>
<div class="t" style="left:143px;top:141px;width:48px;height:15px;color:#000"><svg width="48" height="15" shape-rendering="crispEdges"><g transform="translate(0,0)"><use href="#g53D1"/><use href="#g751F" x="12"/><use href="#g65E5" x="24"/><use href="#g671F" x="36"/></g></svg><span>发生日期</span></div>
<div class="t" style="left:228px;top:141px;width:48px;height:15px;color:#000"><svg width="48" height="15" shape-rendering="crispEdges"><g transform="translate(0,0)"><use href="#g53D1"/><use href="#g751F" x="12"/><use href="#g91D1" x="24"/><use href="#g989D" x="36"/></g></svg><span>发生金额</span></div>
<div class="t" style="left:306px;top:141px;width:48px;height:15px;color:#000"><svg width="48" height="15" shape-rendering="crispEdges"><g transform="translate(0,0)"><use href="#g5F53"/><use href="#g524D" x="12"/><use href="#g4F59" x="24"/><use href="#g989D" x="36"/></g></svg><span>当前余额</span></div>
<div class="t" style="left:398px;top:141px;width:36px;height:15px;color:#000"><svg width="36" height="15" shape-rendering="crispEdges"><g transform="translate(0,0)"><use href="#g7ECF"/><use href="#g529E" x="12"/><use href="#g4EBA" x="24"/></g></svg><span>经办人</span></div>
<div class="t" style="left:517px;top:141px;width:24px;height:15px;color:#000"><svg width="24" height="15" shape-rendering="crispEdges"><g transform="translate(0,0)"><use href="#g8BF4"/><use href="#g660E" x="12"/></g></svg><span>说明</span></div>
<div class="t" style="left:644px;top:141px;width:24px;height:15px;color:#000"><svg width="24" height="15" shape-rendering="crispEdges"><g transform="translate(0,0)"><use href="#g5907"/><use href="#g6CE8" x="12"/></g></svg><span>备注</span></div>
<div class="a" style="left:9px;top:160px;width:11px;height:14px;background:#ededed"></div>
<div class="a" style="left:9px;top:160px;width:1px;height:14px;background:#fff"></div>
<div class="a" style="left:9px;top:174px;width:708px;height:1px;background:#adbfee"></div>
<div class="a" style="left:20px;top:160px;width:1px;height:15px;background:#adbfee"></div>
<div class="a" style="left:119px;top:160px;width:1px;height:15px;background:#adbfee"></div>
<div class="a" style="left:214px;top:160px;width:1px;height:15px;background:#adbfee"></div>
<div class="a" style="left:288px;top:160px;width:1px;height:15px;background:#adbfee"></div>
<div class="a" style="left:371px;top:160px;width:1px;height:15px;background:#adbfee"></div>
<div class="a" style="left:461px;top:160px;width:1px;height:15px;background:#adbfee"></div>
<div class="a" style="left:596px;top:160px;width:1px;height:15px;background:#adbfee"></div>
<div class="a" style="left:716px;top:160px;width:1px;height:15px;background:#adbfee"></div>
<div class="a" style="left:9px;top:175px;width:11px;height:14px;background:#ededed"></div>
<div class="a" style="left:9px;top:175px;width:1px;height:14px;background:#fff"></div>
<div class="a" style="left:21px;top:175px;width:695px;height:14px;background:#316ac5"></div>
<div class="a" style="left:9px;top:189px;width:708px;height:1px;background:#adbfee"></div>
<div class="a" style="left:20px;top:175px;width:1px;height:15px;background:#adbfee"></div>
<div class="a" style="left:119px;top:175px;width:1px;height:15px;background:#adbfee"></div>
<div class="a" style="left:214px;top:175px;width:1px;height:15px;background:#adbfee"></div>
<div class="a" style="left:288px;top:175px;width:1px;height:15px;background:#adbfee"></div>
<div class="a" style="left:371px;top:175px;width:1px;height:15px;background:#adbfee"></div>
<div class="a" style="left:461px;top:175px;width:1px;height:15px;background:#adbfee"></div>
<div class="a" style="left:596px;top:175px;width:1px;height:15px;background:#adbfee"></div>
<div class="a" style="left:716px;top:175px;width:1px;height:15px;background:#adbfee"></div>
<div class="t" style="left:23px;top:176px;width:96px;height:15px;color:#fff"><svg width="96" height="15" shape-rendering="crispEdges"><g transform="translate(0,0)"><use href="#g73B0"/><use href="#g91D1" x="12"/></g></svg><span>现金</span></div>
<div class="t" style="left:215px;top:176px;width:70px;height:15px;color:#fff"><svg width="70" height="15" shape-rendering="crispEdges"><g transform="translate(64,0)"><use href="#g30"/></g></svg><span>0</span></div>
<div class="t" style="left:289px;top:176px;width:79px;height:15px;color:#fff"><svg width="79" height="15" shape-rendering="crispEdges"><g transform="translate(73,0)"><use href="#g30"/></g></svg><span>0</span></div>
<div class="t" style="left:464px;top:176px;width:132px;height:15px;color:#fff"><svg width="132" height="15" shape-rendering="crispEdges"><g transform="translate(0,0)"><use href="#g671F"/><use href="#g521D" x="12"/><use href="#g5EFA" x="24"/><use href="#g8D26" x="36"/></g></svg><span>期初建账</span></div>
<div class="a" style="left:9px;top:190px;width:11px;height:14px;background:#ededed"></div>
<div class="a" style="left:9px;top:190px;width:1px;height:14px;background:#fff"></div>
<div class="a" style="left:9px;top:204px;width:708px;height:1px;background:#adbfee"></div>
<div class="a" style="left:20px;top:190px;width:1px;height:15px;background:#adbfee"></div>
<div class="a" style="left:119px;top:190px;width:1px;height:15px;background:#adbfee"></div>
<div class="a" style="left:214px;top:190px;width:1px;height:15px;background:#adbfee"></div>
<div class="a" style="left:288px;top:190px;width:1px;height:15px;background:#adbfee"></div>
<div class="a" style="left:371px;top:190px;width:1px;height:15px;background:#adbfee"></div>
<div class="a" style="left:461px;top:190px;width:1px;height:15px;background:#adbfee"></div>
<div class="a" style="left:596px;top:190px;width:1px;height:15px;background:#adbfee"></div>
<div class="a" style="left:716px;top:190px;width:1px;height:15px;background:#adbfee"></div>
<div class="t" style="left:23px;top:191px;width:96px;height:15px;color:#000"><svg width="96" height="15" shape-rendering="crispEdges"><g transform="translate(0,0)"><use href="#g73B0"/><use href="#g91D1" x="12"/></g></svg><span>现金</span></div>
<div class="t" style="left:122px;top:191px;width:92px;height:15px;color:#000"><svg width="92" height="15" shape-rendering="crispEdges"><g transform="translate(0,0)"><use href="#g32"/><use href="#g30" x="6"/><use href="#g31" x="12"/><use href="#g34" x="18"/><use href="#g2D" x="24"/><use href="#g30" x="30"/><use href="#g34" x="36"/><use href="#g2D" x="42"/><use href="#g31" x="48"/><use href="#g37" x="54"/><use href="#g30" x="66"/><use href="#g39" x="72"/><use href="#g3A" x="78"/><use href="#g34" x="84"/><use href="#g38" x="90"/></g></svg><span>2014-04-17 09:48</span></div>
<div class="t" style="left:215px;top:191px;width:70px;height:15px;color:#000"><svg width="70" height="15" shape-rendering="crispEdges"><g transform="translate(40,0)"><use href="#g2D"/><use href="#g36" x="6"/><use href="#g32" x="12"/><use href="#g30" x="18"/><use href="#g30" x="24"/></g></svg><span>-6200</span></div>
<div class="t" style="left:289px;top:191px;width:79px;height:15px;color:#000"><svg width="79" height="15" shape-rendering="crispEdges"><g transform="translate(43,0)"><use href="#g2D"/><use href="#g31" x="6"/><use href="#g32" x="12"/><use href="#g37" x="18"/><use href="#g30" x="24"/><use href="#g30" x="30"/></g></svg><span>-12700</span></div>
<div class="t" style="left:374px;top:191px;width:87px;height:15px;color:#000"><svg width="87" height="15" shape-rendering="crispEdges"><g transform="translate(0,0)"><use href="#g5F20"/></g></svg><span>张</span></div>
<div class="t" style="left:464px;top:191px;width:132px;height:15px;color:#000"><svg width="132" height="15" shape-rendering="crispEdges"><g transform="translate(0,0)"><use href="#g8FDB"/><use href="#g8D27" x="12"/><use href="#g3A" x="24"/><use href="#g5B" x="30"/><use href="#g73B0" x="36"/><use href="#g91D1" x="48"/><use href="#g5D" x="60"/><use href="#g4ED8" x="66"/><use href="#g6B3E" x="78"/><use href="#g7ED9" x="90"/><use href="#g5B" x="102"/><use href="#g4F9B" x="108"/><use href="#g8D27" x="120"/></g></svg><span>进货:[现金]付款给[供货</span></div>
<div class="a" style="left:9px;top:205px;width:11px;height:14px;background:#ededed"></div>
<div class="a" style="left:9px;top:205px;width:1px;height:14px;background:#fff"></div>
<div class="a" style="left:21px;top:205px;width:695px;height:14px;background:#dff3ff"></div>
<div class="a" style="left:9px;top:219px;width:708px;height:1px;background:#adbfee"></div>
<div class="a" style="left:20px;top:205px;width:1px;height:15px;background:#adbfee"></div>
<div class="a" style="left:119px;top:205px;width:1px;height:15px;background:#adbfee"></div>
<div class="a" style="left:214px;top:205px;width:1px;height:15px;background:#adbfee"></div>
<div class="a" style="left:288px;top:205px;width:1px;height:15px;background:#adbfee"></div>
<div class="a" style="left:371px;top:205px;width:1px;height:15px;background:#adbfee"></div>
<div class="a" style="left:461px;top:205px;width:1px;height:15px;background:#adbfee"></div>
<div class="a" style="left:596px;top:205px;width:1px;height:15px;background:#adbfee"></div>
<div class="a" style="left:716px;top:205px;width:1px;height:15px;background:#adbfee"></div>
<div class="t" style="left:23px;top:206px;width:96px;height:15px;color:#000"><svg width="96" height="15" shape-rendering="crispEdges"><g transform="translate(0,0)"><use href="#g73B0"/><use href="#g91D1" x="12"/></g></svg><span>现金</span></div>
<div class="t" style="left:122px;top:206px;width:92px;height:15px;color:#000"><svg width="92" height="15" shape-rendering="crispEdges"><g transform="translate(0,0)"><use href="#g32"/><use href="#g30" x="6"/><use href="#g31" x="12"/><use href="#g34" x="18"/><use href="#g2D" x="24"/><use href="#g30" x="30"/><use href="#g34" x="36"/><use href="#g2D" x="42"/><use href="#g31" x="48"/><use href="#g37" x="54"/><use href="#g31" x="66"/><use href="#g31" x="72"/><use href="#g3A" x="78"/><use href="#g33" x="84"/><use href="#g34" x="90"/></g></svg><span>2014-04-17 11:34</span></div>
<div class="t" style="left:215px;top:206px;width:70px;height:15px;color:#000"><svg width="70" height="15" shape-rendering="crispEdges"><g transform="translate(64,0)"><use href="#g30"/></g></svg><span>0</span></div>
<div class="t" style="left:289px;top:206px;width:79px;height:15px;color:#000"><svg width="79" height="15" shape-rendering="crispEdges"><g transform="translate(43,0)"><use href="#g2D"/><use href="#g31" x="6"/><use href="#g32" x="12"/><use href="#g37" x="18"/><use href="#g30" x="24"/><use href="#g30" x="30"/></g></svg><span>-12700</span></div>
<div class="t" style="left:374px;top:206px;width:87px;height:15px;color:#000"><svg width="87" height="15" shape-rendering="crispEdges"><g transform="translate(0,0)"><use href="#g5F20"/></g></svg><span>张</span></div>
<div class="t" style="left:464px;top:206px;width:132px;height:15px;color:#000"><svg width="132" height="15" shape-rendering="crispEdges"><g transform="translate(0,0)"><use href="#g9500"/><use href="#g552E" x="12"/><use href="#g3A" x="24"/><use href="#g5B" x="30"/><use href="#g73B0" x="36"/><use href="#g91D1" x="48"/><use href="#g5D" x="60"/><use href="#g6536" x="66"/><use href="#g6B3E" x="78"/><use href="#g4E8E" x="90"/><use href="#g5B" x="102"/><use href="#g5BA2" x="108"/><use href="#g6237" x="120"/></g></svg><span>销售:[现金]收款于[客户</span></div>
<div class="a" style="left:9px;top:220px;width:11px;height:14px;background:#ededed"></div>
<div class="a" style="left:9px;top:220px;width:1px;height:14px;background:#fff"></div>
<div class="a" style="left:9px;top:234px;width:708px;height:1px;background:#adbfee"></div>
<div class="a" style="left:20px;top:220px;width:1px;height:15px;background:#adbfee"></div>
<div class="a" style="left:119px;top:220px;width:1px;height:15px;background:#adbfee"></div>
<div class="a" style="left:214px;top:220px;width:1px;height:15px;background:#adbfee"></div>
<div class="a" style="left:288px;top:220px;width:1px;height:15px;background:#adbfee"></div>
<div class="a" style="left:371px;top:220px;width:1px;height:15px;background:#adbfee"></div>
<div class="a" style="left:461px;top:220px;width:1px;height:15px;background:#adbfee"></div>
<div class="a" style="left:596px;top:220px;width:1px;height:15px;background:#adbfee"></div>
<div class="a" style="left:716px;top:220px;width:1px;height:15px;background:#adbfee"></div>
<div class="t" style="left:23px;top:221px;width:96px;height:15px;color:#000"><svg width="96" height="15" shape-rendering="crispEdges"><g transform="translate(0,0)"><use href="#g73B0"/><use href="#g91D1" x="12"/></g></svg><span>现金</span></div>
<div class="t" style="left:122px;top:221px;width:92px;height:15px;color:#000"><svg width="92" height="15" shape-rendering="crispEdges"><g transform="translate(0,0)"><use href="#g32"/><use href="#g30" x="6"/><use href="#g31" x="12"/><use href="#g34" x="18"/><use href="#g2D" x="24"/><use href="#g30" x="30"/><use href="#g34" x="36"/><use href="#g2D" x="42"/><use href="#g31" x="48"/><use href="#g37" x="54"/><use href="#g31" x="66"/><use href="#g34" x="72"/><use href="#g3A" x="78"/><use href="#g31" x="84"/><use href="#g36" x="90"/></g></svg><span>2014-04-17 14:16</span></div>
<div class="t" style="left:215px;top:221px;width:70px;height:15px;color:#000"><svg width="70" height="15" shape-rendering="crispEdges"><g transform="translate(64,0)"><use href="#g30"/></g></svg><span>0</span></div>
<div class="t" style="left:289px;top:221px;width:79px;height:15px;color:#000"><svg width="79" height="15" shape-rendering="crispEdges"><g transform="translate(43,0)"><use href="#g2D"/><use href="#g31" x="6"/><use href="#g32" x="12"/><use href="#g37" x="18"/><use href="#g30" x="24"/><use href="#g30" x="30"/></g></svg><span>-12700</span></div>
<div class="t" style="left:374px;top:221px;width:87px;height:15px;color:#000"><svg width="87" height="15" shape-rendering="crispEdges"><g transform="translate(0,0)"><use href="#g5F20"/></g></svg><span>张</span></div>
<div class="t" style="left:464px;top:221px;width:132px;height:15px;color:#000"><svg width="132" height="15" shape-rendering="crispEdges"><g transform="translate(0,0)"><use href="#g8FDB"/><use href="#g8D27" x="12"/><use href="#g3A" x="24"/><use href="#g5B" x="30"/><use href="#g73B0" x="36"/><use href="#g91D1" x="48"/><use href="#g5D" x="60"/><use href="#g4ED8" x="66"/><use href="#g6B3E" x="78"/><use href="#g7ED9" x="90"/><use href="#g5B" x="102"/><use href="#g4F9B" x="108"/><use href="#g8D27" x="120"/></g></svg><span>进货:[现金]付款给[供货</span></div>
<div class="a" style="left:9px;top:235px;width:11px;height:14px;background:#ededed"></div>
<div class="a" style="left:9px;top:235px;width:1px;height:14px;background:#fff"></div>
<div class="a" style="left:21px;top:235px;width:695px;height:14px;background:#dff3ff"></div>
<div class="a" style="left:9px;top:249px;width:708px;height:1px;background:#adbfee"></div>
<div class="a" style="left:20px;top:235px;width:1px;height:15px;background:#adbfee"></div>
<div class="a" style="left:119px;top:235px;width:1px;height:15px;background:#adbfee"></div>
<div class="a" style="left:214px;top:235px;width:1px;height:15px;background:#adbfee"></div>
<div class="a" style="left:288px;top:235px;width:1px;height:15px;background:#adbfee"></div>
<div class="a" style="left:371px;top:235px;width:1px;height:15px;background:#adbfee"></div>
<div class="a" style="left:461px;top:235px;width:1px;height:15px;background:#adbfee"></div>
<div class="a" style="left:596px;top:235px;width:1px;height:15px;background:#adbfee"></div>
<div class="a" style="left:716px;top:235px;width:1px;height:15px;background:#adbfee"></div>
<div class="t" style="left:23px;top:236px;width:96px;height:15px;color:#000"><svg width="96" height="15" shape-rendering="crispEdges"><g transform="translate(0,0)"><use href="#g73B0"/><use href="#g91D1" x="12"/></g></svg><span>现金</span></div>
<div class="t" style="left:122px;top:236px;width:92px;height:15px;color:#000"><svg width="92" height="15" shape-rendering="crispEdges"><g transform="translate(0,0)"><use href="#g32"/><use href="#g30" x="6"/><use href="#g31" x="12"/><use href="#g34" x="18"/><use href="#g2D" x="24"/><use href="#g30" x="30"/><use href="#g34" x="36"/><use href="#g2D" x="42"/><use href="#g31" x="48"/><use href="#g37" x="54"/><use href="#g31" x="66"/><use href="#g34" x="72"/><use href="#g3A" x="78"/><use href="#g33" x="84"/><use href="#g31" x="90"/></g></svg><span>2014-04-17 14:31</span></div>
<div class="t" style="left:215px;top:236px;width:70px;height:15px;color:#000"><svg width="70" height="15" shape-rendering="crispEdges"><g transform="translate(40,0)"><use href="#g2D"/><use href="#g33" x="6"/><use href="#g35" x="12"/><use href="#g30" x="18"/><use href="#g30" x="24"/></g></svg><span>-3500</span></div>
<div class="t" style="left:289px;top:236px;width:79px;height:15px;color:#000"><svg width="79" height="15" shape-rendering="crispEdges"><g transform="translate(43,0)"><use href="#g2D"/><use href="#g31" x="6"/><use href="#g36" x="12"/><use href="#g32" x="18"/><use href="#g30" x="24"/><use href="#g30" x="30"/></g></svg><span>-16200</span></div>
<div class="t" style="left:374px;top:236px;width:87px;height:15px;color:#000"><svg width="87" height="15" shape-rendering="crispEdges"><g transform="translate(0,0)"><use href="#g5F20"/></g></svg><span>张</span></div>
<div class="t" style="left:464px;top:236px;width:132px;height:15px;color:#000"><svg width="132" height="15" shape-rendering="crispEdges"><g transform="translate(0,0)"><use href="#g8FDB"/><use href="#g8D27" x="12"/><use href="#g3A" x="24"/><use href="#g5B" x="30"/><use href="#g73B0" x="36"/><use href="#g91D1" x="48"/><use href="#g5D" x="60"/><use href="#g4ED8" x="66"/><use href="#g6B3E" x="78"/><use href="#g7ED9" x="90"/><use href="#g5B" x="102"/><use href="#g4F9B" x="108"/><use href="#g8D27" x="120"/></g></svg><span>进货:[现金]付款给[供货</span></div>
<div class="a" style="left:9px;top:250px;width:11px;height:14px;background:#ededed"></div>
<div class="a" style="left:9px;top:250px;width:1px;height:14px;background:#fff"></div>
<div class="a" style="left:9px;top:264px;width:708px;height:1px;background:#adbfee"></div>
<div class="a" style="left:20px;top:250px;width:1px;height:15px;background:#adbfee"></div>
<div class="a" style="left:119px;top:250px;width:1px;height:15px;background:#adbfee"></div>
<div class="a" style="left:214px;top:250px;width:1px;height:15px;background:#adbfee"></div>
<div class="a" style="left:288px;top:250px;width:1px;height:15px;background:#adbfee"></div>
<div class="a" style="left:371px;top:250px;width:1px;height:15px;background:#adbfee"></div>
<div class="a" style="left:461px;top:250px;width:1px;height:15px;background:#adbfee"></div>
<div class="a" style="left:596px;top:250px;width:1px;height:15px;background:#adbfee"></div>
<div class="a" style="left:716px;top:250px;width:1px;height:15px;background:#adbfee"></div>
<div class="t" style="left:23px;top:251px;width:96px;height:15px;color:#000"><svg width="96" height="15" shape-rendering="crispEdges"><g transform="translate(0,0)"><use href="#g73B0"/><use href="#g91D1" x="12"/></g></svg><span>现金</span></div>
<div class="t" style="left:122px;top:251px;width:92px;height:15px;color:#000"><svg width="92" height="15" shape-rendering="crispEdges"><g transform="translate(0,0)"><use href="#g32"/><use href="#g30" x="6"/><use href="#g31" x="12"/><use href="#g34" x="18"/><use href="#g2D" x="24"/><use href="#g30" x="30"/><use href="#g34" x="36"/><use href="#g2D" x="42"/><use href="#g31" x="48"/><use href="#g37" x="54"/><use href="#g31" x="66"/><use href="#g34" x="72"/><use href="#g3A" x="78"/><use href="#g34" x="84"/><use href="#g33" x="90"/></g></svg><span>2014-04-17 14:43</span></div>
<div class="t" style="left:215px;top:251px;width:70px;height:15px;color:#000"><svg width="70" height="15" shape-rendering="crispEdges"><g transform="translate(52,0)"><use href="#g2D"/><use href="#g38" x="6"/><use href="#g30" x="12"/></g></svg><span>-80</span></div>
<div class="t" style="left:289px;top:251px;width:79px;height:15px;color:#000"><svg width="79" height="15" shape-rendering="crispEdges"><g transform="translate(43,0)"><use href="#g2D"/><use href="#g31" x="6"/><use href="#g36" x="12"/><use href="#g32" x="18"/><use href="#g38" x="24"/><use href="#g30" x="30"/></g></svg><span>-16280</span></div>
<div class="t" style="left:374px;top:251px;width:87px;height:15px;color:#000"><svg width="87" height="15" shape-rendering="crispEdges"><g transform="translate(0,0)"><use href="#g5F20"/></g></svg><span>张</span></div>
<div class="t" style="left:464px;top:251px;width:132px;height:15px;color:#000"><svg width="132" height="15" shape-rendering="crispEdges"><g transform="translate(0,0)"><use href="#g8FDB"/><use href="#g8D27" x="12"/><use href="#g3A" x="24"/><use href="#g5B" x="30"/><use href="#g73B0" x="36"/><use href="#g91D1" x="48"/><use href="#g5D" x="60"/><use href="#g4ED8" x="66"/><use href="#g6B3E" x="78"/><use href="#g7ED9" x="90"/><use href="#g5B" x="102"/><use href="#g4F9B" x="108"/><use href="#g8D27" x="120"/></g></svg><span>进货:[现金]付款给[供货</span></div>
<div class="a" style="left:9px;top:265px;width:11px;height:14px;background:#ededed"></div>
<div class="a" style="left:9px;top:265px;width:1px;height:14px;background:#fff"></div>
<div class="a" style="left:21px;top:265px;width:695px;height:14px;background:#dff3ff"></div>
<div class="a" style="left:9px;top:279px;width:708px;height:1px;background:#adbfee"></div>
<div class="a" style="left:20px;top:265px;width:1px;height:15px;background:#adbfee"></div>
<div class="a" style="left:119px;top:265px;width:1px;height:15px;background:#adbfee"></div>
<div class="a" style="left:214px;top:265px;width:1px;height:15px;background:#adbfee"></div>
<div class="a" style="left:288px;top:265px;width:1px;height:15px;background:#adbfee"></div>
<div class="a" style="left:371px;top:265px;width:1px;height:15px;background:#adbfee"></div>
<div class="a" style="left:461px;top:265px;width:1px;height:15px;background:#adbfee"></div>
<div class="a" style="left:596px;top:265px;width:1px;height:15px;background:#adbfee"></div>
<div class="a" style="left:716px;top:265px;width:1px;height:15px;background:#adbfee"></div>
<div class="t" style="left:23px;top:266px;width:96px;height:15px;color:#000"><svg width="96" height="15" shape-rendering="crispEdges"><g transform="translate(0,0)"><use href="#g73B0"/><use href="#g91D1" x="12"/></g></svg><span>现金</span></div>
<div class="t" style="left:122px;top:266px;width:92px;height:15px;color:#000"><svg width="92" height="15" shape-rendering="crispEdges"><g transform="translate(0,0)"><use href="#g32"/><use href="#g30" x="6"/><use href="#g31" x="12"/><use href="#g34" x="18"/><use href="#g2D" x="24"/><use href="#g30" x="30"/><use href="#g34" x="36"/><use href="#g2D" x="42"/><use href="#g31" x="48"/><use href="#g37" x="54"/><use href="#g31" x="66"/><use href="#g34" x="72"/><use href="#g3A" x="78"/><use href="#g35" x="84"/><use href="#g31" x="90"/></g></svg><span>2014-04-17 14:51</span></div>
<div class="t" style="left:215px;top:266px;width:70px;height:15px;color:#000"><svg width="70" height="15" shape-rendering="crispEdges"><g transform="translate(46,0)"><use href="#g2D"/><use href="#g31" x="6"/><use href="#g30" x="12"/><use href="#g30" x="18"/></g></svg><span>-100</span></div>
<div class="t" style="left:289px;top:266px;width:79px;height:15px;color:#000"><svg width="79" height="15" shape-rendering="crispEdges"><g transform="translate(43,0)"><use href="#g2D"/><use href="#g31" x="6"/><use href="#g36" x="12"/><use href="#g33" x="18"/><use href="#g38" x="24"/><use href="#g30" x="30"/></g></svg><span>-16380</span></div>
<div class="t" style="left:374px;top:266px;width:87px;height:15px;color:#000"><svg width="87" height="15" shape-rendering="crispEdges"><g transform="translate(0,0)"><use href="#g674E"/></g></svg><span>李</span></div>
<div class="t" style="left:464px;top:266px;width:132px;height:15px;color:#000"><svg width="132" height="15" shape-rendering="crispEdges"><g transform="translate(0,0)"><use href="#g8D39"/><use href="#g7528" x="12"/><use href="#g652F" x="24"/><use href="#g51FA" x="36"/></g></svg><span>费用支出</span></div>
<div class="a" style="left:9px;top:280px;width:11px;height:14px;background:#ededed"></div>
<div class="a" style="left:9px;top:280px;width:1px;height:14px;background:#fff"></div>
<div class="a" style="left:9px;top:294px;width:708px;height:1px;background:#adbfee"></div>
<div class="a" style="left:20px;top:280px;width:1px;height:15px;background:#adbfee"></div>
<div class="a" style="left:119px;top:280px;width:1px;height:15px;background:#adbfee"></div>
<div class="a" style="left:214px;top:280px;width:1px;height:15px;background:#adbfee"></div>
<div class="a" style="left:288px;top:280px;width:1px;height:15px;background:#adbfee"></div>
<div class="a" style="left:371px;top:280px;width:1px;height:15px;background:#adbfee"></div>
<div class="a" style="left:461px;top:280px;width:1px;height:15px;background:#adbfee"></div>
<div class="a" style="left:596px;top:280px;width:1px;height:15px;background:#adbfee"></div>
<div class="a" style="left:716px;top:280px;width:1px;height:15px;background:#adbfee"></div>
<div class="t" style="left:23px;top:281px;width:96px;height:15px;color:#000"><svg width="96" height="15" shape-rendering="crispEdges"><g transform="translate(0,0)"><use href="#g73B0"/><use href="#g91D1" x="12"/></g></svg><span>现金</span></div>
<div class="t" style="left:122px;top:281px;width:92px;height:15px;color:#000"><svg width="92" height="15" shape-rendering="crispEdges"><g transform="translate(0,0)"><use href="#g32"/><use href="#g30" x="6"/><use href="#g31" x="12"/><use href="#g34" x="18"/><use href="#g2D" x="24"/><use href="#g30" x="30"/><use href="#g34" x="36"/><use href="#g2D" x="42"/><use href="#g31" x="48"/><use href="#g37" x="54"/><use href="#g31" x="66"/><use href="#g34" x="72"/><use href="#g3A" x="78"/><use href="#g35" x="84"/><use href="#g32" x="90"/></g></svg><span>2014-04-17 14:52</span></div>
<div class="t" style="left:215px;top:281px;width:70px;height:15px;color:#000"><svg width="70" height="15" shape-rendering="crispEdges"><g transform="translate(58,0)"><use href="#g35"/><use href="#g30" x="6"/></g></svg><span>50</span></div>
<div class="t" style="left:289px;top:281px;width:79px;height:15px;color:#000"><svg width="79" height="15" shape-rendering="crispEdges"><g transform="translate(43,0)"><use href="#g2D"/><use href="#g31" x="6"/><use href="#g36" x="12"/><use href="#g33" x="18"/><use href="#g33" x="24"/><use href="#g30" x="30"/></g></svg><span>-16330</span></div>
<div class="t" style="left:374px;top:281px;width:87px;height:15px;color:#000"><svg width="87" height="15" shape-rendering="crispEdges"><g transform="translate(0,0)"><use href="#g738B"/></g></svg><span>王</span></div>
<div class="t" style="left:464px;top:281px;width:132px;height:15px;color:#000"><svg width="132" height="15" shape-rendering="crispEdges"><g transform="translate(0,0)"><use href="#g5176"/><use href="#g5B83" x="12"/><use href="#g6536" x="24"/><use href="#g5165" x="36"/></g></svg><span>其它收入</span></div>
<svg class="a" style="left:11px;top:175px" width="9" height="14"><path d="M1 1L7 6.6L1 12.2Z" fill="#000"/></svg>
<div class="a" style="left:9px;top:457px;width:708px;height:1px;background:#adbfee"></div>
<div class="a" style="left:9px;top:458px;width:11px;height:14px;background:#ededed"></div>
<div class="a" style="left:9px;top:458px;width:1px;height:14px;background:#fff"></div>
<div class="a" style="left:21px;top:458px;width:695px;height:14px;background:#dff3ff"></div>
<div class="a" style="left:9px;top:472px;width:708px;height:1px;background:#adbfee"></div>
<div class="a" style="left:20px;top:457px;width:1px;height:16px;background:#adbfee"></div>
<div class="a" style="left:119px;top:457px;width:1px;height:16px;background:#adbfee"></div>
<div class="a" style="left:214px;top:457px;width:1px;height:16px;background:#adbfee"></div>
<div class="a" style="left:288px;top:457px;width:1px;height:16px;background:#adbfee"></div>
<div class="a" style="left:371px;top:457px;width:1px;height:16px;background:#adbfee"></div>
<div class="a" style="left:461px;top:457px;width:1px;height:16px;background:#adbfee"></div>
<div class="a" style="left:596px;top:457px;width:1px;height:16px;background:#adbfee"></div>
<div class="a" style="left:716px;top:457px;width:1px;height:16px;background:#adbfee"></div>
<div class="t" style="left:23px;top:458px;width:48px;height:15px;color:#000"><svg width="48" height="15" shape-rendering="crispEdges"><g transform="translate(0,0)"><use href="#g8BB0"/><use href="#g5F55" x="12"/><use href="#g6570" x="24"/><use href="#gFF1A" x="36"/></g></svg><span>记录数：</span></div>
<div class="t" style="left:122px;top:459px;width:6px;height:15px;color:#000"><svg width="6" height="15" shape-rendering="crispEdges"><g transform="translate(0,0)"><use href="#g38"/></g></svg><span>8</span></div>
<div class="t" style="left:215px;top:459px;width:70px;height:15px;color:#000"><svg width="70" height="15" shape-rendering="crispEdges"><g transform="translate(40,0)"><use href="#g2D"/><use href="#g39" x="6"/><use href="#g38" x="12"/><use href="#g33" x="18"/><use href="#g30" x="24"/></g></svg><span>-9830</span></div>
<div class="a" style="left:717px;top:138px;width:16px;height:335px;background:linear-gradient(90deg,#e1e1df,#eeeeec 50%,#f7f7f6)"></div>
<div class="a" style="left:733px;top:138px;width:1px;height:335px;background:#f6f4f1"></div>
<div class="a" style="left:717px;top:138px;width:16px;height:16px;background:linear-gradient(100deg,#fff 20%,#f2f2f1 55%,#e0e0de);box-sizing:border-box;border-right:1px solid #cbc8c3;border-bottom:1px solid #bfb9b0;border-top:1px solid #fdfdfd;border-left:1px solid #fdfdfd;box-shadow:inset 1px 1px 0 #fff,inset -1px -1px 0 #ededeb"></div>
<svg class="a" style="left:722px;top:144px" width="7" height="4" shape-rendering="crispEdges"><path d="M3 0h1v1h-1zM2 1h3v1h-3zM1 2h5v1h-5zM0 3h7v1h-7z" fill="#000"/></svg>
<div class="a" style="left:717px;top:154px;width:16px;height:1px;background:#d2cfca"></div>
<div class="a" style="left:717px;top:456px;width:16px;height:1px;background:#cdcdcb"></div>
<div class="a" style="left:717px;top:457px;width:16px;height:16px;background:linear-gradient(100deg,#fff 20%,#f2f2f1 55%,#e0e0de);box-sizing:border-box;border-right:1px solid #cbc8c3;border-bottom:1px solid #bfb9b0;border-top:1px solid #fdfdfd;border-left:1px solid #fdfdfd;box-shadow:inset 1px 1px 0 #fff,inset -1px -1px 0 #ededeb"></div>
<svg class="a" style="left:722px;top:462px" width="7" height="4" shape-rendering="crispEdges"><path d="M0 0h7v1h-7zM1 1h5v1h-5zM2 2h3v1h-3zM3 3h1v1h-1z" fill="#000"/></svg>
<div class="a" style="left:718px;top:155px;width:15px;height:161px;box-sizing:border-box;border:1px solid #8f8f9a;border-radius:2px;background:linear-gradient(90deg,#fff,#f1f1f6 30%,#c6c6d6)"></div>
<div class="a" style="left:722px;top:230px;width:7px;height:1px;background:#d8d2bc"></div>
<div class="a" style="left:722px;top:231px;width:7px;height:1px;background:#9c9478"></div>
<div class="a" style="left:722px;top:233px;width:7px;height:1px;background:#d8d2bc"></div>
<div class="a" style="left:722px;top:234px;width:7px;height:1px;background:#9c9478"></div>
<div class="a" style="left:722px;top:236px;width:7px;height:1px;background:#d8d2bc"></div>
<div class="a" style="left:722px;top:237px;width:7px;height:1px;background:#9c9478"></div>
<div class="t" style="left:18px;top:481px;width:288px;height:15px;color:#fff"><svg width="288" height="15" shape-rendering="crispEdges"><g transform="translate(0,0)"><use href="#g46"/><use href="#g32" x="6"/><use href="#g2D" x="12"/><use href="#g5165" x="18"/><use href="#g6B3E" x="30"/><use href="#g46" x="48"/><use href="#g33" x="54"/><use href="#g2D" x="60"/><use href="#g51FA" x="66"/><use href="#g6B3E" x="78"/><use href="#g46" x="96"/><use href="#g34" x="102"/><use href="#g2D" x="108"/><use href="#g8F6C" x="114"/><use href="#g8D26" x="126"/><use href="#g46" x="144"/><use href="#g35" x="150"/><use href="#g2D" x="156"/><use href="#g5BFC" x="162"/><use href="#g51FA" x="174"/><use href="#g46" x="192"/><use href="#g36" x="198"/><use href="#g2D" x="204"/><use href="#g6253" x="210"/><use href="#g5370" x="222"/><use href="#g45" x="240"/><use href="#g73" x="246"/><use href="#g63" x="252"/><use href="#g2D" x="258"/><use href="#g9000" x="264"/><use href="#g51FA" x="276"/></g></svg><span>F2-入款 F3-出款 F4-转账 F5-导出 F6-打印 Esc-退出</span></div>
</body></html>
